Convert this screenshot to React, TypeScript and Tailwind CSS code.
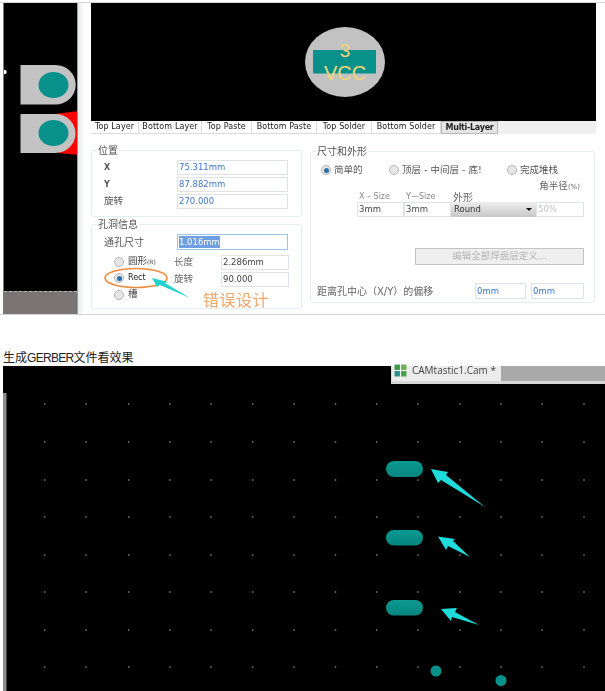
const cjk = "font-['Liberation_Sans','Noto_Sans_CJK_SC',sans-serif]";
const ui = "font-['DejaVu_Sans','Noto_Sans_CJK_SC',sans-serif]";

const tabs = [
  { t: "Top Layer", w: "w-[48px]" },
  { t: "Bottom Layer", w: "w-[63px]" },
  { t: "Top Paste", w: "w-[50px]" },
  { t: "Bottom Paste", w: "w-[65px]" },
  { t: "Top Solder", w: "w-[55px]" },
  { t: "Bottom Solder", w: "w-[69px]" },
];

const dotX = [44.7, 86, 128.7, 170, 211, 252.7, 294, 335.5, 376.7, 418, 460, 501, 542, 584];
const dotY = [404, 442, 480, 517, 555, 592, 630, 667];

function Field({ v, className = "", tone = "text-[#3f78c9]" }: { v: string; className?: string; tone?: string }) {
  return (
    <div className={`flex h-[15px] items-center border border-[#dfe3e8] bg-white pl-[1px] text-[8.5px] ${tone} ${className}`}>
      {v}
    </div>
  );
}

function Radio({ on = false }: { on?: boolean }) {
  return (
    <span className="flex h-[10px] w-[10px] shrink-0 items-center justify-center rounded-full border border-[#b5b5b5] bg-[#e6e6e6]">
      {on && <span className="h-[5px] w-[5px] rounded-full bg-[#2a6ea8]" />}
    </span>
  );
}

function Group({ title, className, legend, children }: { title: string; className: string; legend: string; children: React.ReactNode }) {
  return (
    <fieldset className={`min-w-0 rounded-[3px] border border-[#e3edf3] ${className}`}>
      <legend className={`px-[1px] text-[10px] leading-[11px] text-[#555] ${legend}`}>{title}</legend>
      {children}
    </fieldset>
  );
}

export default function App() {
  return (
    <div className={`h-[691px] w-[605px] overflow-hidden bg-white ${ui}`}>
      <div className="h-[2px]" />
      <div className="relative h-[313px] w-[605px] border-y border-[#d4d4d4]">
        <div className="flex h-full blur-[0.35px]">
          {/* board strip */}
          <div className="ml-[3px] flex h-full w-[75px] flex-col border-x-[1px] border-l-[#7a7a7a] border-r-[#9aa0a0] bg-black">
            <svg viewBox="4 3 72 288" className="h-[288px] w-[73px] shrink-0">
              <circle cx="4" cy="72" r="2.200" fill="#fff" />
              <polygon points="54,114 78,111 78,155 58,153" fill="#ff0000" />
              <path d="M20 65 H55 A20 19.5 0 0 1 55 104.500 H20 Z" fill="#c3c3c3" />
              <ellipse cx="53" cy="85" rx="15" ry="13" fill="#07918a" />
              <path d="M20 114 H55 A20 19.500 0 0 1 55 153 H20 Z" fill="#c3c3c3" />
              <ellipse cx="53" cy="133" rx="15" ry="13" fill="#07918a" />
            </svg>
            <div className="flex-1 border-t border-dashed border-[#b9b5b4] bg-[#7a7574]" />
          </div>
          <div className="w-[13px] bg-gradient-to-r from-[#e6ebeb] via-white to-white" />

          {/* pad editor */}
          <div className="w-[505px]">
            <svg viewBox="91 3 505 118" className="block h-[118px] w-[505px]">
              <rect x="91" y="3" width="505" height="118" fill="#000" />
              <ellipse cx="345" cy="62" rx="40" ry="35" fill="#c2c2c2" />
              <rect x="313" y="50" width="63" height="23.500" fill="#07918a" />
              <text x="345" y="57" textAnchor="middle" fontSize="19" fill="#f0d67a" fontFamily="Liberation Sans">3</text>
              <text x="345" y="80" textAnchor="middle" fontSize="20" fill="#f0d67a" fontFamily="Liberation Sans">VCC</text>
            </svg>

            <div className="flex h-[13px] w-[505px] bg-[#f0f0f0] text-[8px] tracking-[0.1px] text-[#222]">
              {tabs.map((x) => (
                <div key={x.t} className={`flex items-center justify-center border-r border-b border-[#dcdcdc] bg-white ${x.w}`}>
                  {x.t}
                </div>
              ))}
              <div className="flex w-[57px] items-center justify-center border border-[#b8b8b8] bg-[#e4e4e4] font-bold tracking-[-0.3px] text-[#222]">
                Multi-Layer
              </div>
            </div>

            <div className="mt-[11px] flex">
              <div className="w-[211px]">
                <Group title="位置" legend="-ml-[7px]" className="h-[72px] pl-[12px]">
                  <div className="grid grid-cols-[73px_111px] content-start gap-y-[2px] pt-[4px] text-[8px] text-[#555]">
                    <span className="self-center font-bold">X</span>
                    <Field v="75.311mm" />
                    <span className="self-center font-bold">Y</span>
                    <Field v="87.882mm" />
                    <span className="self-center text-[9.500px]">旋转</span>
                    <Field v="270.000" />
                  </div>
                </Group>

                <Group title="孔洞信息" legend="-ml-[7px]" className="mt-[2px] h-[90px] pl-[12px]">
                  <div className="flex items-center pt-[4px]">
                    <span className="w-[73px] text-[10px] text-[#555]">通孔尺寸</span>
                    <div className="flex h-[16px] w-[111px] items-center border border-[#9cc4e8] pl-[1px] text-[8.5px]">
                      <span className="bg-[#6f9fe0] text-white">1.016mm</span>
                    </div>
                  </div>
                  <div className="mt-[5px] flex items-start text-[8px] text-[#444]">
                    <div className="ml-[10px] flex w-[56px] flex-col gap-[5.500px] pt-[1px]">
                      <div className="flex h-[11px] items-center gap-[4px]"><Radio /><span className="whitespace-nowrap text-[9.500px]">圆形<span className="text-[6px]">(R)</span></span></div>
                      <div className="flex h-[11px] items-center gap-[4px]"><Radio on /><span className="text-[#222]">Rect</span></div>
                      <div className="flex h-[11px] items-center gap-[4px]"><Radio /><span className="text-[9.500px]">槽</span></div>
                    </div>
                    <div className="grid grid-cols-[47px_68px] content-start gap-y-[2px] pl-[4px]">
                      <span className="self-center text-[9.500px] text-[#666]">长度</span>
                      <Field v="2.286mm" tone="text-[#444]" />
                      <span className="self-center text-[9.500px] text-[#666]">旋转</span>
                      <Field v="90.000" tone="text-[#444]" />
                    </div>
                  </div>
                </Group>
              </div>

              <div className="ml-[8px] w-[285px]">
                <Group title="尺寸和外形" legend="-ml-[4px]" className="mt-[1px] h-[157px] pl-[9px]">
                  <div className="flex h-[14px] items-center pt-[12px] text-[9.500px] text-[#555]">
                    <div className="ml-[1px] flex w-[68px] items-center gap-[3px]"><Radio on /><span>简单的</span></div>
                    <div className="flex w-[118px] items-center gap-[3px]"><Radio /><span className="whitespace-nowrap">顶层 - 中间层 - 底!</span></div>
                    <div className="flex items-center gap-[3px]"><Radio /><span>完成堆栈</span></div>
                  </div>
                  <div className="mt-[10px] pr-[14px] text-right text-[9.500px] leading-[10px] text-[#666]">角半径<span className="text-[7px]">(%)</span></div>
                  <div className="ml-[39px] flex h-[10px] items-center text-[8px] text-[#888]">
                    <span className="w-[47px]">X – Size</span>
                    <span className="w-[47px]">Y—Size</span>
                    <span className="text-[10px] text-[#666]">外形</span>
                  </div>
                  <div className="ml-[37px] flex h-[15px] text-[8.5px] text-[#444]">
                    <Field v="3mm" tone="text-[#444]" className="w-[47px]" />
                    <Field v="3mm" tone="text-[#444]" className="w-[47px]" />
                    <div className="flex w-[85px] items-center justify-between bg-gradient-to-b from-[#eeeeee] to-[#c8c8c8] pl-[3px] pr-[4px] text-[#333]">
                      <span>Round</span>
                      <svg viewBox="0 0 6 3" className="h-[3px] w-[6px]"><polygon points="0,0 6,0 3,3" fill="#111" /></svg>
                    </div>
                    <Field v="50%" tone="text-[#c4c4c4]" className="w-[48px]" />
                  </div>
                  <div className="ml-[95px] mt-[31px] flex h-[17px] w-[169px] items-center justify-center border border-[#c4c4c4] bg-[#efefef] text-[9.500px] text-[#b5b5b5]">
                    编辑全部焊盘层定义...
                  </div>
                  <div className="-ml-[3px] mt-[18px] flex h-[16px] items-center text-[10px] text-[#666]">
                    <span className="w-[158px] whitespace-nowrap">距离孔中心（X/Y）的偏移</span>
                    <Field v="0mm" className="h-[16px] w-[51px]" />
                    <Field v="0mm" className="ml-[5px] h-[16px] w-[53px]" />
                  </div>
                </Group>
              </div>
            </div>
          </div>
        </div>

        {/* annotation over the form */}
        <svg viewBox="0 0 605 313" className="absolute left-0 top-0 h-[313px] w-[605px] blur-[0.3px]">
          <ellipse cx="136" cy="275" rx="31" ry="9.500" fill="none" stroke="#ee8a3c" strokeWidth="1.600" />
          <polygon points="152,275 168,279 165,280 190,295 160,282 157,284" fill="#22d3cf" />
        </svg>
        <div className="absolute left-[203px] top-[287px] text-[16px] leading-[18px] tracking-[0.5px] text-[#f2a66a] font-['Noto_Sans_CJK_SC',sans-serif]">
          错误设计
        </div>
      </div>

      <div className={`ml-[3px] mt-[36px] h-[15px] text-[12px] leading-[15px] text-[#222] ${cjk}`}>
        生成<span className="tracking-[-0.7px]">GERBER</span>文件看效果
      </div>

      <div className="relative ml-[3px] h-[325px] w-[602px] bg-black">
        <svg viewBox="3 366 602 325" className="block h-[325px] w-[602px]">
          <defs>
            <linearGradient id="padFill" x1="0" y1="0" x2="0" y2="1">
              <stop offset="0" stopColor="#0a9a92" />
              <stop offset="1" stopColor="#07857f" />
            </linearGradient>
          </defs>
          <rect x="3" y="393" width="3.500" height="298" fill="#8c8c8c" />
          {dotY.flatMap((y) =>
            dotX.map((x) => <rect key={`${x}-${y}`} x={x - 0.7} y={y - 0.7} width="1.400" height="1.400" fill="#8a8a8a" />)
          )}
          <rect x="386" y="461" width="37" height="16" rx="8" fill="url(#padFill)" />
          <rect x="386" y="530" width="37" height="15.500" rx="7.750" fill="url(#padFill)" />
          <rect x="386" y="600" width="37" height="15.500" rx="7.750" fill="url(#padFill)" />
          <circle cx="436" cy="671" r="5.500" fill="#07918a" />
          <circle cx="501" cy="680.500" r="5.500" fill="#07918a" />
          <polygon points="431,469 448,472 446,475 485,507 441,480 438,483" fill="#1fdcdc" />
          <polygon points="438,536.500 455,539 453,541 470,557 448,546 446,550" fill="#1fdcdc" />
          <polygon points="441,609 457,608 455,612 479,625 452,617 451,621" fill="#1fdcdc" />
        </svg>
        <div className="absolute left-[388px] top-0 flex h-[18px] w-[214px] border-b-[3px] border-l border-[#d8d8d8] blur-[0.3px]">
          <div className="flex w-[109px] items-center gap-[5px] bg-[#ececec] pb-[6px] pl-[2px] font-['Open_Sans',sans-serif] text-[10px] text-[#444]">
            <svg viewBox="0 0 12 12" className="h-[13px] w-[13px] shrink-0">
              <rect x="0.500" y="0.500" width="5" height="5" fill="#3a9a4a" />
              <rect x="6.500" y="0.500" width="5" height="5" fill="#6cae5c" />
              <rect x="0.500" y="6.500" width="5" height="5" fill="#2f8f8a" />
              <rect x="6.500" y="6.500" width="5" height="5" fill="#4aa04e" />
              <path d="M6 1V11M1 6H11" stroke="#fff" strokeWidth="1" />
            </svg>
            <span className="whitespace-nowrap">CAMtastic1.Cam *</span>
          </div>
          <div className="flex-1 bg-[#a9a9a9]" />
        </div>
      </div>
    </div>
  );
}
